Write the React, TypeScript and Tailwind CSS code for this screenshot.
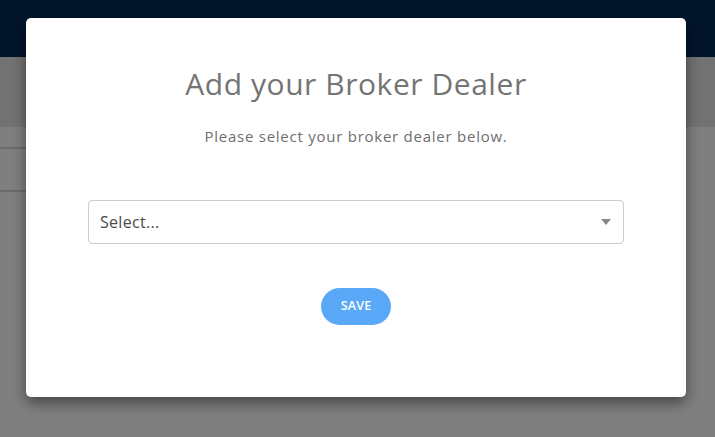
const font = { fontFamily: '"Open Sans", Lato, sans-serif' };

export default function App() {
  return (
    <div className="relative h-[437px] w-[715px] overflow-hidden bg-white" style={font}>
      {/* page underneath */}
      <div className="h-[57px] bg-[#042b55]" />
      <div className="h-[70px] bg-[#e4e4e4]" />
      <div className="w-[420px]">
        <div className="h-[22px] border-b-2 border-[#d6d6d6]" />
        <div className="h-[43px] border-b-2 border-[#d6d6d6]" />
      </div>

      {/* backdrop + dialog */}
      <div className="absolute inset-0 bg-black/50">
        <div className="ml-[26px] mt-[18px] flex h-[379px] w-[660px] flex-col items-center rounded-[5px] bg-white shadow-[0_6px_14px_rgba(0,0,0,0.45)]">
          <h1 className="mt-[48px] text-[30px] leading-[36px] tracking-[0.55px] text-[#747474]">
            Add your Broker Dealer
          </h1>
          <p className="mt-[24px] text-[15px] leading-[20px] tracking-[0.75px] text-[#6e6e6e]">
            Please select your broker dealer below.
          </p>

          <div className="mt-[54px] flex h-[44px] w-[536px] items-center justify-between rounded-[4px] border border-[#cccccc] pl-[11px] pr-[12px]">
            <span className="text-[16px] tracking-[0.3px] text-[#4a4a4a]">Select...</span>
            <svg width="10" height="6" viewBox="0 0 10 6">
              <path d="M0 0h10L5 6z" fill="#888888" />
            </svg>
          </div>

          <button className="mt-[44px] h-[37px] w-[70px] rounded-full bg-[#5aa8f8] text-[12.5px] font-semibold tracking-[0.2px] text-white">
            SAVE
          </button>
        </div>
      </div>
    </div>
  );
}
